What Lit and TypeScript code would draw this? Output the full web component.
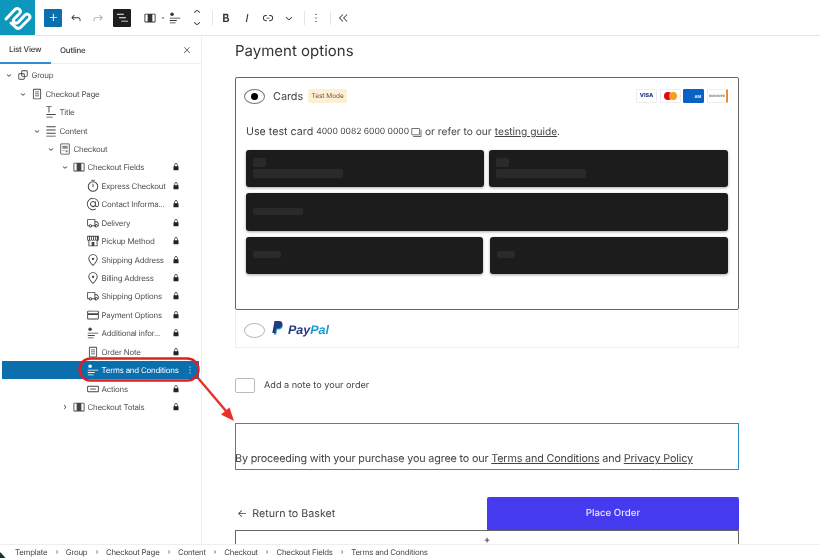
import { LitElement, html, css, svg } from "lit";
import { customElement } from "lit/decorators.js";

const P: Record<string, any> = {
  down: svg`<path d="M17.5 11.6L12 16l-5.5-4.4.9-1.2L12 14l4.5-3.6 1 1.2z"/>`,
  up: svg`<path d="M6.5 12.4L12 8l5.5 4.4-.9 1.2L12 10l-4.5 3.6-1-1.2z"/>`,
  right: svg`<path d="M10.6 6.5L15 12l-4.4 5.5-1.2-.9L13 12 9.4 7.5l1.2-1z"/>`,
  group: svg`<path d="M18 4h-7c-1.1 0-2 .9-2 2v3H6c-1.1 0-2 .9-2 2v7c0 1.1.9 2 2 2h7c1.1 0 2-.9 2-2v-3h3c1.1 0 2-.9 2-2V6c0-1.1-.9-2-2-2zm-4.5 14c0 .3-.2.5-.5.5H6c-.3 0-.5-.2-.5-.5v-7c0-.3.2-.5.5-.5h3V13c0 1.1.9 2 2 2h2.5v3zm0-4.5H11c-.3 0-.5-.2-.5-.5v-2.5H13c.3 0 .5.2.5.5v2.5zm5-.5c0 .3-.2.5-.5.5h-3V11c0-1.1-.9-2-2-2h-2.5V6c0-.3.2-.5.5-.5h7c.3 0 .5.2.5.5v7z"/>`,
  page: svg`<path d="M15.5 7.5h-7V9h7V7.5Zm-7 3.500h7v1.500h-7V11Zm7 3.500h-7V16h7v-1.500Z"/><path d="M17 3H7a2 2 0 0 0-2 2v14a2 2 0 0 0 2 2h10a2 2 0 0 0 2-2V5a2 2 0 0 0-2-2ZM7 4.500h10a.5.5 0 0 1 .5.5v14a.5.5 0 0 1-.5.5H7a.5.5 0 0 1-.5-.5V5a.5.5 0 0 1 .5-.5Z"/>`,
  title: svg`<path d="M4 2h9v1.600H9.300V13H7.700V3.600H4V2ZM4 15.500h16V17H4zM4 20h11v1.500H4z"/>`,
  content: svg`<path d="M4 4h16v1.500H4zM4 9.500h16V11H4zM4 15h16v1.500H4zM4 20h16v1.500H4z"/>`,
  checkout: svg`<path d="M18 2.500H6a2 2 0 0 0-2 2v15a2 2 0 0 0 2 2h12a2 2 0 0 0 2-2v-15a2 2 0 0 0-2-2Zm.6 17a.6.6 0 0 1-.6.6H6a.6.6 0 0 1-.6-.6v-15a.6.6 0 0 1 .6-.6h12a.6.6 0 0 1 .6.600Z"/><path fill="#888" d="M7.500 6.500h9v5h-9zM7.500 14h4v1.500h-4zM13 14h3.500v3.500H13z"/>`,
  fields: svg`<path d="M4 4.500h16a1.500 1.500 0 0 1 1.500 1.500v12a1.500 1.500 0 0 1-1.500 1.500H4A1.500 1.500 0 0 1 2.500 18V6A1.500 1.500 0 0 1 4 4.500Zm0 1.500V18h4V6Zm12 0V18h4V6Z" fill-rule="evenodd"/>`,
  timer: svg`<path d="M9 1.500h6V3H9z"/><path d="M12 4a9 9 0 1 0 0 18 9 9 0 0 0 0-18Zm0 1.700a7.300 7.300 0 1 1 0 14.600 7.300 7.300 0 0 1 0-14.600Z"/><path d="M11.200 8h1.600v6h-1.600z"/>`,
  at: svg`<path d="M12 1.500a10.500 10.500 0 1 0 5.200 19.600l-.7-1.300A9 9 0 1 1 21 12c0 2-.7 3.500-2.200 3.500-1.100 0-1.800-.8-1.800-2V7.500h-1.500v1.100A5 5 0 1 0 15.800 15.700a3.300 3.300 0 0 0 3 1.300c2.500 0 3.700-2.300 3.700-5A10.500 10.500 0 0 0 12 1.500Zm0 14a3.500 3.500 0 1 1 0-7 3.500 3.500 0 0 1 0 7Z"/>`,
  truck: svg`<path d="M3.500 5h11a1.500 1.500 0 0 1 1.500 1.500V9h3l3 4v3.500a1 1 0 0 1-1 1h-1.100a2.800 2.800 0 0 1-5.400 0H10.400a2.800 2.800 0 0 1-5.400 0H3.500A1.500 1.500 0 0 1 2 16V6.500A1.500 1.500 0 0 1 3.500 5Zm0 1.500V16h1.600a2.800 2.800 0 0 1 5.200 0h4.200V6.500Zm12.500 4V15a2.800 2.800 0 0 1 4.900 1h.1v-2.500L18.200 10.500ZM7.700 15.500a1.300 1.300 0 1 0 0 2.600 1.300 1.300 0 0 0 0-2.600Zm10.500 0a1.300 1.300 0 1 0 0 2.600 1.300 1.300 0 0 0 0-2.600Z" fill-rule="evenodd"/>`,
  store: svg`<path d="M2 3h20v6.500c0 1.300-1 2.300-2.200 2.300V21H4.200v-9.200C3 11.800 2 10.800 2 9.500Zm1.500 1.500V9.500c0 .5.400.8.800.8s.9-.3.900-.8V4.500Zm3.200 0V9.500c0 .5.400.8.900.8s.9-.3.900-.8V4.500Zm3.300 0V9.500c0 .5.400.8.900.8h.2c.5 0 .9-.3.900-.8V4.500Zm3.600 0V9.500c0 .5.400.8.900.8s.9-.3.900-.8V4.500Zm3.200 0V9.500c0 .5.400.8.900.8s.8-.3.800-.8V4.500ZM5.700 11.500v8h4v-6h4.600v6h4v-8c-.8 0-1.400-.3-1.900-.8-.5.5-1.100.8-1.800.8s-1.300-.3-1.800-.8c-.5.5-1.100.8-1.800.8s-1.300-.3-1.800-.8c-.5.500-1.100.8-1.800.8s-1.300-.3-1.800-.8Z" fill-rule="evenodd"/>`,
  pin: svg`<path d="M12 2a8 8 0 0 0-8 8c0 5 8 12.500 8 12.500S20 15 20 10a8 8 0 0 0-8-8Zm0 1.600A6.400 6.400 0 0 1 18.400 10c0 3.400-4.500 8.400-6.400 10.300C10.100 18.400 5.600 13.400 5.600 10A6.400 6.400 0 0 1 12 3.600Z"/><circle cx="12" cy="10" r="2"/>`,
  card: svg`<path d="M4 4.500h16a2 2 0 0 1 2 2v11a2 2 0 0 1-2 2H4a2 2 0 0 1-2-2v-11a2 2 0 0 1 2-2Zm-.4 2.200v2.300h16.800V6.700a.5.5 0 0 0-.5-.5H4.100a.5.5 0 0 0-.5.5Zm0 5.300v5.500a.5.5 0 0 0 .5.5h15.800a.5.5 0 0 0 .5-.5V12Z" fill-rule="evenodd"/>`,
  form: svg`<circle cx="7" cy="5.500" r="3"/><path d="M3 11.500h18V13H3zM3 15.500h12V17H3zM3 19.500h10V21H3z"/>`,
  button: svg`<path d="M4 6.500h16a2 2 0 0 1 2 2v7a2 2 0 0 1-2 2H4a2 2 0 0 1-2-2v-7a2 2 0 0 1 2-2Zm-.4 2v7c0 .3.200.5.500.5h15.800c.3 0 .5-.2.500-.5v-7c0-.3-.2-.5-.5-.5H4.100c-.3 0-.5.200-.5.500Z" fill-rule="evenodd"/><path d="M7 11.300h10v1.500H7z"/>`,
  lock: svg`<path d="M17 10h-1.200V7c0-2.100-1.700-3.800-3.800-3.800-2.100 0-3.800 1.700-3.800 3.800v3H7c-.6 0-1 .4-1 1v8c0 .6.400 1 1 1h10c.6 0 1-.4 1-1v-8c0-.6-.4-1-1-1zm-2.800 0H9.800V7c0-1.200 1-2.200 2.200-2.200s2.200 1 2.200 2.200v3z"/>`,
  more: svg`<path d="M13 19h-2v-2h2v2zm0-6h-2v-2h2v2zm0-6h-2V5h2v2z"/>`,
  plus: svg`<path d="M11 12.500V17.500H12.500V12.500H17.500V11H12.500V6H11V11H6V12.500H11Z"/>`,
  undo: svg`<path d="M18.300 11.700c-.6-.6-1.400-.9-2.300-.9H6.700l2.900-3.300-1.100-1-4.500 5L8.500 16l1-1-2.700-2.700H16c.5 0 .9.200 1.300.5 1 1 1 3.400 1 4.500v.3h1.500v-.2c0-1.500 0-4.300-1.500-5.700z"/>`,
  redo: svg`<path d="M15.600 6.500l-1.100 1 2.900 3.300H8c-.9 0-1.700.3-2.300.9-1.400 1.500-1.400 4.200-1.400 5.600v.2h1.500v-.3c0-1.100 0-3.500 1-4.500.3-.3.7-.5 1.300-.5h9.200L14.500 15l1.100 1.100 4.600-4.600-4.600-5z"/>`,
  list: svg`<path d="M3 6h11v1.500H3V6Zm3.500 5.500h11V13h-11v-1.500ZM21 17H10v1.500h11V17Z"/>`,
  link: svg`<path d="M10 17.389H8.444A5.194 5.194 0 1 1 8.444 7H10v1.500H8.444a3.694 3.694 0 0 0 0 7.389H10v1.500ZM14 7h1.556a5.194 5.194 0 0 1 0 10.390H14v-1.500h1.556a3.694 3.694 0 0 0 0-7.390H14V7Zm-4.500 6h5v-1.500h-5V13Z"/>`,
  close: svg`<path d="M13 11.800l6.100-6.300-1-1-6.100 6.200-6.100-6.200-1 1 6.100 6.300-6.500 6.700 1 1 6.500-6.600 6.500 6.600 1-1z"/>`,
  collapse: svg`<path d="M11.500 5.500 5 12l6.500 6.500 1-1L7 12l5.500-5.500ZM18.500 5.500 12 12l6.500 6.500 1-1L14 12l5.500-5.500Z"/>`,
  bold: svg`<path d="M14.700 11.300c1-.6 1.500-1.600 1.500-3 0-2.300-1.300-3.400-4-3.400H7v14h5.800c1.400 0 2.500-.3 3.300-1 .8-.7 1.200-1.700 1.200-2.900.1-1.900-.8-3.100-2.600-3.700zm-5.100-4h2.300c.6 0 1.100.1 1.400.4.300.3.500.7.500 1.200s-.2 1-.5 1.200c-.3.3-.8.4-1.400.4H9.600V7.300zm4.600 9c-.4.300-1 .4-1.700.4H9.600v-3.900h2.900c.7 0 1.300.2 1.700.5.400.3.600.8.600 1.500s-.2 1.200-.6 1.500z"/>`,
  italic: svg`<path d="M12.500 5L10 19h1.900l2.500-14z"/>`,
};

const ic = (n: string, s = 14, cls = "") =>
  html`<svg class="ic ${cls}" width=${s} height=${s} viewBox="0 0 24 24" aria-hidden="true">${P[n]}</svg>`;

type Row = { d: number; label: string; icon: string; chev?: string; lock?: boolean; sel?: boolean };
const rows: Row[] = [
  { d: 0, label: "Group", icon: "group", chev: "down" },
  { d: 1, label: "Checkout Page", icon: "page", chev: "down" },
  { d: 2, label: "Title", icon: "title" },
  { d: 2, label: "Content", icon: "content", chev: "down" },
  { d: 3, label: "Checkout", icon: "checkout", chev: "down" },
  { d: 4, label: "Checkout Fields", icon: "fields", chev: "down", lock: true },
  { d: 5, label: "Express Checkout", icon: "timer", lock: true },
  { d: 5, label: "Contact Informa...", icon: "at", lock: true },
  { d: 5, label: "Delivery", icon: "truck", lock: true },
  { d: 5, label: "Pickup Method", icon: "store", lock: true },
  { d: 5, label: "Shipping Address", icon: "pin", lock: true },
  { d: 5, label: "Billing Address", icon: "pin", lock: true },
  { d: 5, label: "Shipping Options", icon: "truck", lock: true },
  { d: 5, label: "Payment Options", icon: "card", lock: true },
  { d: 5, label: "Additional infor...", icon: "form", lock: true },
  { d: 5, label: "Order Note", icon: "page", lock: true },
  { d: 5, label: "Terms and Conditions", icon: "form", sel: true },
  { d: 5, label: "Actions", icon: "button", lock: true },
  { d: 4, label: "Checkout Totals", icon: "fields", chev: "right", lock: true },
];

const crumbs = ["Template", "Group", "Checkout Page", "Content", "Checkout", "Checkout Fields", "Terms and Conditions"];

@customElement("app-root")
export class AppRoot extends LitElement {
  static styles = css`
    :host { display: block; width: 820px; height: 558px; position: relative; overflow: hidden; background: #fff; font-family: Inter, "Liberation Sans", sans-serif; color: #444; text-rendering: geometricPrecision; filter: blur(.3px); }
    * { box-sizing: border-box; }
    .ic { fill: currentColor; display: block; flex: none; }
    .app { display: flex; flex-direction: column; height: 558px; }

    .top { height: 36px; flex: none; display: flex; align-items: center; border-bottom: 1px solid #e6e6e6; color: #333; }
    .logo { width: 35px; height: 35px; background: #0e97bd; flex: none; }
    .logo svg { display: block; }
    .tb { display: flex; align-items: center; justify-content: center; flex: none; width: 18px; height: 18px; }
    .add { margin-left: 9px; background: #0b6fae; color: #fff; border-radius: 1px; }
    .undo { margin-left: 5px; }
    .redo { margin-left: 4px; color: #aaa; }
    .lv { margin-left: 6px; background: #1e1e1e; color: #fff; border-radius: 1px; }
    .blk { margin-left: 10px; }
    .dot { width: 2px; height: 2px; border-radius: 50%; background: #888; margin-left: 3px; flex: none; }
    .align { margin-left: 2px; }
    .mover { margin-left: 4px; display: flex; flex-direction: column; flex: none; width: 18px; align-items: center; gap: 1px; }
    .mover .ic { margin: -2px 0; }
    .div { width: 1px; height: 14px; background: #e4e4e4; flex: none; }
    .d1 { margin-left: 6px; }
    .bold { margin-left: 4px; }
    .ital { margin-left: 3px; }
    .lnk { margin-left: 3px; }
    .chv { margin-left: 3px; }
    .d2 { margin-left: 6px; }
    .dots { margin-left: 2px; }
    .d3 { margin-left: 5px; }
    .coll { margin-left: 3px; }

    .body { flex: 1; min-height: 0; display: flex; }
    .side { width: 202px; flex: none; border-right: 1px solid #eee; }
    .tabs { height: 28px; display: flex; align-items: center; border-bottom: 1px solid #eee; font-size: 7.900px; letter-spacing: -.2px; font-weight: 500; color: #3a3a3a; }
    .tab { height: 100%; display: flex; align-items: center; }
    .tab.on { width: 51px; padding-left: 9px; border-bottom: 2px solid #2f8fd0; margin-bottom: -1px; height: 28px; }
    .tab.off { margin-left: 9px; }
    .x { margin-left: auto; margin-right: 9px; color: #444; }
    .tree { padding: 2px 2px 0 2px; font-size: 7.900px; letter-spacing: -.22px; color: #505050; }
    .row { height: 18.440px; display: flex; align-items: center; }
    .row.sel { background: #0b6fae; color: #fff; }
    .chev { width: 14px; flex: none; display: flex; justify-content: center; color: #333; }
    .icon { width: 14px; flex: none; display: flex; justify-content: center; color: #444; }
    .row.sel .icon { color: #fff; }
    .lbl { margin-left: 1.500px; flex: 1; white-space: nowrap; }
    .lock { margin-right: 18px; color: #222; }
    .more { margin-right: 3px; color: #fff; }

    .canvas { flex: 1; min-width: 0; overflow: hidden; padding-left: 33px; }
    .col { width: 504px; font-size: 10.500px; color: #444; display: flex; flex-direction: column; }
    h2 { margin: 6px 0 0; height: 18px; line-height: 18px; font-size: 15px; font-weight: 400; color: #333; }
    .card { margin-top: 17px; height: 233px; border: 1px solid #666; border-radius: 2px; padding: 0 10px; display: flex; flex-direction: column; }
    .chead { height: 36px; display: flex; align-items: center; margin-left: -2px; }
    .radio { width: 21px; height: 15px; border-radius: 50%; border: 1px solid #777; flex: none; display: flex; align-items: center; justify-content: center; background: #fff; }
    .radio i { width: 7px; height: 7px; border-radius: 50%; background: #000; display: block; }
    .cname { margin-left: 8px; font-size: 10.800px; color: #444; }
    .tm { margin-left: 5px; height: 14px; width: 39px; background: #fdefd3; border-radius: 2px; font-size: 6.500px; line-height: 14px; color: #6d5b38; text-align: center; white-space: nowrap; }
    .brands { margin-left: auto; display: flex; gap: 2.660px; }
    .brand { width: 21px; height: 14px; border: 1px solid #eee; border-radius: 1px; background: #fff; display: flex; align-items: center; justify-content: center; overflow: hidden; font-size: 5.500px; font-weight: 800; color: #2a3a7c; }
    .brand.amex { background: #0a62c4; border-color: #0a62c4; color: #dbe7f6; justify-content: flex-end; padding-right: 2px; font-size: 4px; }
    .brand.disc { font-size: 3px; font-weight: 600; color: #555; border-right: 2px solid #f08a2c; white-space: nowrap; }
    .mc { display: block; width: 8px; height: 8px; border-radius: 50%; background: #eb001b; }
    .mc + .mc { background: #f79e1b; margin-left: -3px; }
    .test { margin-top: 9px; height: 18px; line-height: 18px; font-size: 10.200px; color: #444; white-space: nowrap; display: flex; align-items: center; }
    .ut { font-size: 10.700px; }
    .num { font-size: 8.600px; margin: 0 0 0 3px; letter-spacing: -.05px; }
    .copy { margin: 0 3px 0 2px; color: #444; }
    .test a { margin-left: 3px; }
    a { color: inherit; text-decoration: underline; }
    .fields { margin-top: 9px; display: grid; gap: 6px; }
    .frow { display: flex; justify-content: space-between; }
    .fld { height: 37px; background: #1c1c1c; border-radius: 3px; box-shadow: 0 1px 3px rgba(0,0,0,.35); padding: 8px 7px; display: flex; flex-direction: column; gap: 2px; flex: none; }
    .fld i { display: block; height: 9px; border-radius: 2px; background: #2a2a2a; }
    .fld.one { justify-content: center; padding-top: 0; padding-bottom: 2px; }
    .fld.one i { height: 7px; }
    .pay { height: 38px; border: 1px solid #eee; border-top: 0; padding: 0 0 0 8px; display: flex; align-items: center; }
    .radio.off { border-color: #bbb; margin-top: 3px; }
    .plogo { margin-left: 7px; display: flex; align-items: center; gap: 4px; margin-top: -1px; }
    .pp { font-family: "Liberation Sans", sans-serif; font-style: italic; font-weight: 700; font-size: 12.500px; color: #253b80; margin-top: 3px; }
    .pp b { color: #179bd7; }
    .note { margin-top: 30px; height: 15px; display: flex; align-items: center; font-size: 9.150px; color: #444; }
    .cb { width: 20px; height: 15px; border: 1px solid #bbb; border-radius: 2px; margin-right: 9px; }
    .terms { margin-top: 30px; height: 47px; border: 1px solid #2b8fc4; font-size: 10.800px; letter-spacing: -.17px; display: flex; align-items: flex-end; padding-bottom: 2px; white-space: nowrap; color: #444; line-height: 16px; }
    .terms span { margin-left: -1px; }
    .actions { margin-top: 27px; height: 34px; display: flex; align-items: center; justify-content: space-between; }
    .back { margin-left: 2px; font-size: 10.700px; color: #444; display: flex; gap: 5px; margin-top: -1px; }
    .place { width: 252px; height: 34px; background: #463aee; color: #e8e6ff; border-radius: 2px; display: flex; align-items: center; justify-content: center; font-size: 9.700px; font-weight: 500; padding-bottom: 1px; }
    .more-box { height: 14px; border: 1px solid #666; border-bottom: 0; margin-top: -1px; display: flex; justify-content: center; font-size: 10px; color: #222; }
    .more-box span { display: block; height: 8px; line-height: 8px; margin-top: 5px; }

    .crumbs { height: 14px; flex: none; border-top: 1px solid #eee; display: flex; align-items: center; padding-left: 15px; font-size: 7.800px; letter-spacing: -.2px; color: #444; background: #fff; white-space: nowrap; }
    .sep { width: 18.500px; display: flex; justify-content: center; flex: none; color: #333; }

    .overlay { position: absolute; left: 0; top: 0; width: 820px; height: 558px; pointer-events: none; }
  `;

  render() {
    return html`
      <div class="app">
        <div class="top">
          <div class="logo">
            <svg width="35" height="35" viewBox="0 0 35 35" fill="none" stroke="#fff" stroke-width="3" stroke-linejoin="round" stroke-linecap="round" aria-hidden="true">
              <path d="M6 19 15 9.500Q17.500 7.500 19.500 9.500 21.500 11.500 19.500 13.500L14 19Q12.500 21 14.500 22.500 16.500 24 18.500 22L25 15Q27 13 29 15 31 17 29 19L21 27Q18.500 29.500 16 27.500L11 23"/>
            </svg>
          </div>
          <div class="tb add">${ic("plus", 15)}</div>
          <div class="tb undo">${ic("undo")}</div>
          <div class="tb redo">${ic("redo")}</div>
          <div class="tb lv">${ic("list", 15)}</div>
          <div class="tb blk">${ic("fields")}</div>
          <div class="dot"></div>
          <div class="tb align">${ic("form")}</div>
          <div class="mover">${ic("up")}${ic("down")}</div>
          <div class="div d1"></div>
          <div class="tb bold">${ic("bold")}</div>
          <div class="tb ital">${ic("italic")}</div>
          <div class="tb lnk">${ic("link")}</div>
          <div class="tb chv">${ic("down")}</div>
          <div class="div d2"></div>
          <div class="tb dots">${ic("more")}</div>
          <div class="div d3"></div>
          <div class="tb coll">${ic("collapse")}</div>
        </div>
        <div class="body">
          <div class="side">
            <div class="tabs">
              <div class="tab on">List View</div>
              <div class="tab off">Outline</div>
              <div class="x">${ic("close", 10)}</div>
            </div>
            <div class="tree">
              ${rows.map(
                (r) => html`<div class="row ${r.sel ? "sel" : ""}" style="padding-left:${14 * r.d}px">
                  <span class="chev">${r.chev ? ic(r.chev, 10) : ""}</span>
                  <span class="icon">${ic(r.icon)}</span>
                  <span class="lbl">${r.label}</span>
                  ${r.lock ? ic("lock", 10, "lock") : ""}
                  ${r.sel ? ic("more", 12, "more") : ""}
                </div>`
              )}
            </div>
          </div>
          <div class="canvas">
            <div class="col">
              <h2>Payment options</h2>
              <div class="card">
                <div class="chead">
                  <span class="radio"><i></i></span>
                  <span class="cname">Cards</span>
                  <span class="tm">Test Mode</span>
                  <span class="brands">
                    <span class="brand">VISA</span>
                    <span class="brand"><i class="mc"></i><i class="mc"></i></span>
                    <span class="brand amex">AM</span>
                    <span class="brand disc">DISCOVER</span>
                  </span>
                </div>
                <div class="test">
                  <span class="ut">Use test card</span><span class="num">4000 0082 6000 0000</span>
                  <svg class="ic copy" width="11" height="11" viewBox="0 0 12 12" aria-hidden="true"><path d="M1.500 1h7a1 1 0 0 1 1 1v6a1 1 0 0 1-1 1h-7a1 1 0 0 1-1-1V2a1 1 0 0 1 1-1Zm0 .8a.2.2 0 0 0-.2.2v6c0 .1.100.2.200.2h7c.1 0 .2-.1.200-.2V2a.2.2 0 0 0-.2-.2ZM10.500 3h.8v7a1 1 0 0 1-1 1h-8v-.8h8c.1 0 .2-.1.200-.2Z" fill-rule="evenodd"/></svg>
                  or refer to our <a>testing guide</a>.
                </div>
                <div class="fields">
                  <div class="frow">
                    <div class="fld" style="width:238px"><i style="width:13px"></i><i style="width:90px"></i></div>
                    <div class="fld" style="width:239px"><i style="width:13px"></i><i style="width:90px"></i></div>
                  </div>
                  <div class="frow">
                    <div class="fld one" style="width:482px;height:38px"><i style="width:50px"></i></div>
                  </div>
                  <div class="frow">
                    <div class="fld one" style="width:237px"><i style="width:28px"></i></div>
                    <div class="fld one" style="width:238px"><i style="width:18px"></i></div>
                  </div>
                </div>
              </div>
              <div class="pay">
                <span class="radio off"></span>
                <span class="plogo">
                  <svg width="12" height="15" viewBox="0 0 12 15" aria-hidden="true"><path fill="#179bd7" d="M10.500 3.500c.8 2.600-1 5-4 5H5l-.8 5H1.800L4 3Z"/><path fill="#253b80" d="M2.500 0h4.500C9.500 0 11 1.500 10.300 4c-.6 2.500-2.300 3.500-4.500 3.500H4.300L3.500 12H.3Z"/></svg>
                  <span class="pp">Pay<b>Pal</b></span>
                </span>
              </div>
              <div class="note"><span class="cb"></span>Add a note to your order</div>
              <div class="terms"><span>By proceeding with your purchase you agree to our <a>Terms and Conditions</a> and <a>Privacy Policy</a></span></div>
              <div class="actions">
                <span class="back"><span>←</span><span>Return to Basket</span></span>
                <span class="place">Place Order</span>
              </div>
              <div class="more-box"><span>+</span></div>
            </div>
          </div>
        </div>
        <div class="crumbs">
          ${crumbs.map(
            (c, i) => html`${i ? html`<span class="sep">${ic("right", 8)}</span>` : ""}<span>${c}</span>`
          )}
        </div>
      </div>
      <svg class="overlay" viewBox="0 0 820 558" aria-hidden="true">
        <rect x="79.500" y="358.500" width="119" height="22" rx="11" fill="none" stroke="#e02020" stroke-width="2.400"/>
        <path d="M198 378 L226 411" stroke="#e8302a" stroke-width="2.400" fill="none"/>
        <path d="M234 421 L221 414.500 L229.500 407.500 Z" fill="#e8302a"/>
        <path d="M0 558V552L2 554 5.500 558Z" fill="#12302c"/>
      </svg>
    `;
  }
}
